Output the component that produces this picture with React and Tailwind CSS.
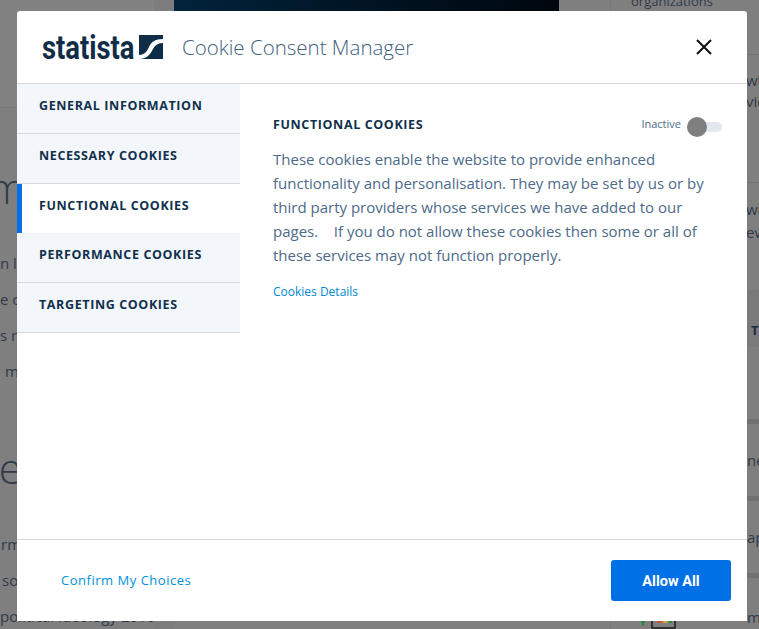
const MENU = [
  { label: 'General Information' },
  { label: 'Necessary Cookies' },
  { label: 'Functional Cookies', active: true },
  { label: 'Performance Cookies' },
  { label: 'Targeting Cookies' },
]

function Backdrop() {
  return (
    <div className="flex h-[629px] overflow-hidden bg-[#7f7f7f] text-[#2f3b48]">
      <div className="w-[154px] shrink-0">
        <div className="h-[108px] border-b border-[#787878] bg-[#828282]" />
        <p className="mt-[50px] -ml-[34px] h-[60px] text-[42px] leading-[60px] font-light">am</p>
        <div className="mt-[27px] text-[15px] leading-[36px]">
          <p>n l</p>
          <p>e c</p>
          <p>s n</p>
          <p className="pl-[5px]">m</p>
        </div>
        <p className="mt-[49px] -ml-[26px] h-[60px] text-[42px] leading-[60px] font-light">ne</p>
        <div className="mt-[28px] text-[15px] leading-[36px]">
          <p className="pl-[1px]">rm</p>
          <p className="pl-[2px]">so</p>
          <p className="whitespace-nowrap">political ideology 2016</p>
        </div>
      </div>
      <div className="w-[20px] shrink-0 bg-[#7d7d7d]" />
      <div className="h-[11px] w-[385px] shrink-0 bg-gradient-to-r from-[#01233b] to-[#00070e]" />
      <div className="w-[51px] shrink-0" />
      <div className="flex w-[149px] shrink-0 flex-col border-l border-[#777777] text-[15px]">
        <div className="h-[55px] border-b border-[#747474] pl-[20px] text-[13px] whitespace-nowrap">
          <p className="-mt-[9px] leading-[20px]">organizations</p>
        </div>
        <div className="h-[128px] border-b border-[#747474] pt-[15px] pl-[135px] leading-[21px] whitespace-nowrap">
          <p>wh</p>
          <p>vid</p>
        </div>
        <div className="h-[107px] pt-[15px] pl-[135px] leading-[23px] whitespace-nowrap">
          <p>wh</p>
          <p>ew</p>
        </div>
        <div className="h-[57px] bg-[#7a7a7a] pl-[140px] text-[13px] leading-[80px] font-bold text-[#1c2f42]">T</div>
        <div className="h-[72px]" />
        <div className="flex h-[82px] flex-col justify-center border-y-[5px] border-[#717171] pl-[136px]">ne</div>
        <div className="flex h-[72px] flex-col justify-center pl-[136px]">ap</div>
        <div className="flex h-[56px] border-t-[5px] border-[#717171] pl-[30px]">
          <svg width="36" height="8" viewBox="0 0 36 8" fill="none" className="mt-[43px] shrink-0">
            <path d="M0 0H4L2.5 5H1.5Z" fill="#1f8a3c" />
            <path d="M11 0V7H34V0" stroke="#1a1a1a" strokeWidth="1.5" />
            <path d="M16 0H20V2H16Z" fill="#d8482f" />
            <path d="M22 0H26V2H22Z" fill="#e0a020" />
            <path d="M28 0H31V2H28Z" fill="#1f8a3c" />
          </svg>
          <span className="mt-[28px] ml-[70px]">m</span>
        </div>
      </div>
    </div>
  )
}

function Logo() {
  return (
    <div className="flex items-center gap-[6px] text-[#0f2d46]">
      <span className="inline-block w-[91px] origin-left scale-x-[0.83] font-['Roboto',sans-serif] text-[33px] leading-none font-bold whitespace-nowrap">
        statista
      </span>
      <svg width="24" height="24" viewBox="0 0 24 24" className="shrink-0">
        <rect width="24" height="24" fill="#0f2d46" />
        <path d="M0 24V20C6 20 8 16 10 12C12 7 16 4 24 4V8C18 8 15.5 11 13.5 15C11 20 7 24 0 24Z" fill="#fff" />
      </svg>
    </div>
  )
}

function MenuItem({ label, active }) {
  return (
    <div
      className={
        active
          ? 'flex h-[49px] items-center border-l-[5px] border-[#0070e6] bg-white pb-[5px] pl-[17px]'
          : 'flex h-[50px] items-center border-b border-[#d5d8dd] bg-[#f3f6fa] pb-[5px] pl-[22px]'
      }
    >
      <span className="text-[12.5px] font-bold tracking-[0.62px] text-[#10304c] uppercase">{label}</span>
    </div>
  )
}

export default function App() {
  return (
    <div className="relative h-[629px] w-[759px] overflow-hidden font-['Open_Sans',sans-serif]">
      <Backdrop />

      <div className="absolute top-[11px] left-[17px] flex h-[610px] w-[730px] flex-col rounded-t-[3px] bg-white">
        <div className="flex h-[73px] shrink-0 items-center border-b border-[#d8d8d8] pr-[35px] pl-[25px]">
          <Logo />
          <h1 className="ml-[19px] text-[20.5px] font-light text-[#3f5f80]">Cookie Consent Manager</h1>
          <button className="ml-auto">
            <svg width="16" height="16" viewBox="0 0 16 16" fill="none" stroke="#111" strokeWidth="2">
              <path d="M1 1L15 15M15 1L1 15" />
            </svg>
          </button>
        </div>

        <div className="flex min-h-0 flex-1">
          <div className="w-[223px] shrink-0">
            {MENU.map((item) => (
              <MenuItem key={item.label} label={item.label} active={item.active} />
            ))}
          </div>
          <div className="flex-1 pt-[30px] pr-[25px] pl-[33px]">
            <div className="flex h-[20px] items-center justify-between">
              <h2 className="mt-[2px] text-[12.5px] font-bold tracking-[0.62px] text-[#10304c] uppercase">Functional Cookies</h2>
              <div className="flex items-center gap-[6px]">
                <span className="text-[11px] text-[#4d6a8a]">Inactive</span>
                <div className="relative mt-[6px] h-[10px] w-[35px] rounded-full bg-[#e3e8f0]">
                  <div className="absolute top-[-5px] left-0 h-[20px] w-[20px] rounded-full bg-[#7f7f7f]" />
                </div>
              </div>
            </div>
            <p className="mt-[13px] text-[15px] leading-[24px] whitespace-pre-wrap text-[#4d6a8a]">
              These cookies enable the website to provide enhanced functionality and personalisation. They may be set by us or by third party providers whose services we have added to our pages.{'    '}If you do not allow these cookies then some or all of these services may not function properly.
            </p>
            <a className="mt-[16px] block text-[12px] text-[#0087cf]">Cookies Details</a>
          </div>
        </div>

        <div className="flex h-[82px] shrink-0 items-center justify-between border-t border-[#d8d8d8] pr-[16px] pl-[44px]">
          <a className="text-[13px] tracking-[0.52px] text-[#0091e0]">Confirm My Choices</a>
          <button className="h-[41px] w-[120px] rounded-[3px] bg-[#0070e6] pt-[2px] font-['Roboto',sans-serif] text-[14.5px] font-bold text-white">
            Allow All
          </button>
        </div>
      </div>
    </div>
  )
}
